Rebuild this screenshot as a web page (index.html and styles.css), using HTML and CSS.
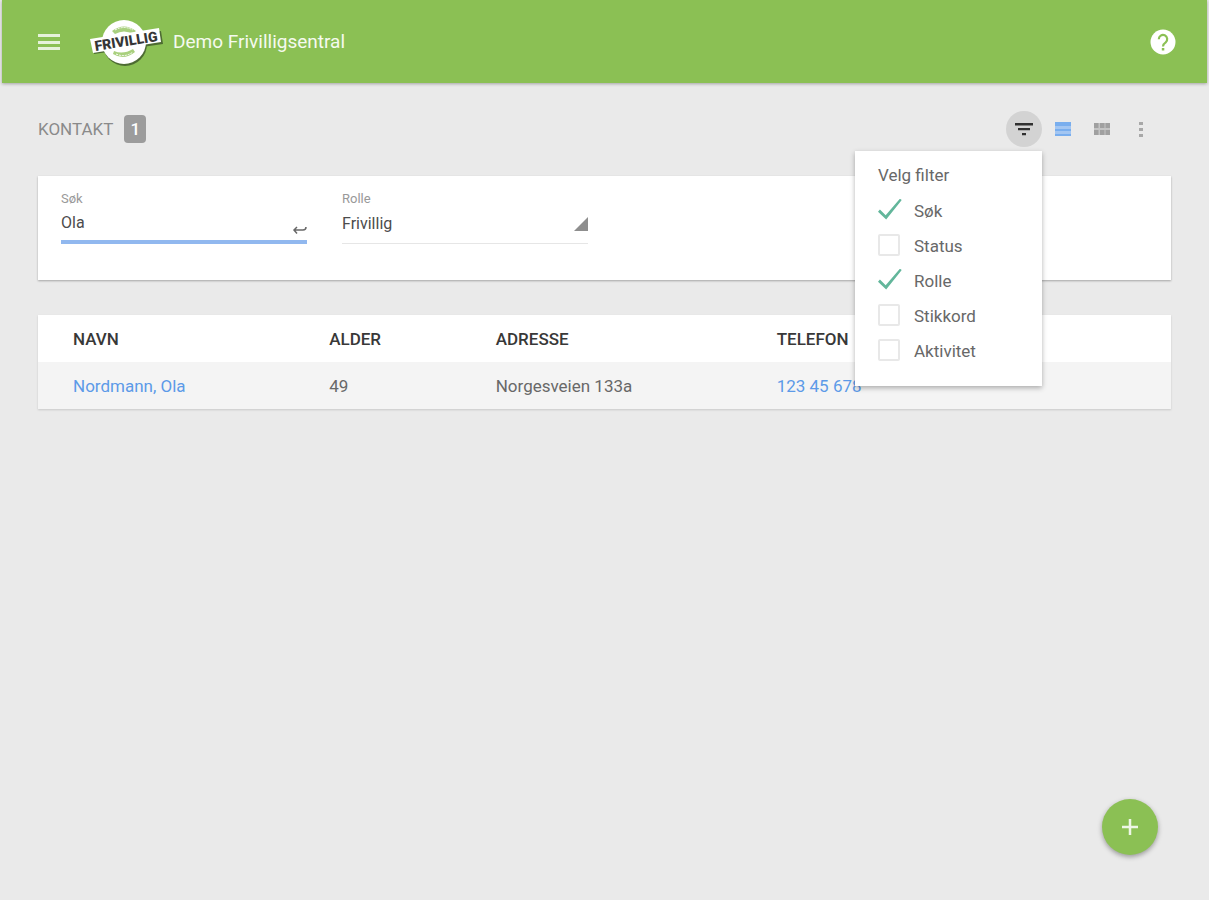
FILE: index.html
```html
<!DOCTYPE html>
<html lang="no">
<head>
<meta charset="utf-8">
<meta name="viewport" content="width=device-width, initial-scale=1">
<title>Demo Frivilligsentral</title>
<link rel="stylesheet" href="styles.css">
</head>
<body>
<header class="topbar">
  <button class="icon-button menu-button" type="button" aria-label="Meny">
    <svg width="22" height="18" viewBox="0 0 22 18"><path fill="#e6f2da" d="M0 1h22v3H0zM0 8h22v3H0zM0 14h22v3H0z"/></svg>
  </button>
  <a class="brand" href="#">
    <svg class="logo" width="76" height="52" viewBox="0 0 76 52" role="img" aria-label="Frivillig">
      <g fill="#4d6b32">
        <circle cx="36" cy="28" r="22"/>
        <path d="M3 25L72 15L74 28L5 38z"/>
      </g>
      <circle cx="35" cy="26" r="22" fill="#fff"/>
      <path d="M23 15q12-9 24 0l-3 3q-9-5-18 0zM24 38q11 7 22-2l-2-3q-10 6-19 2z" fill="#a9d07e"/>
      <path d="M26 14q9-5 18 0M27 38q9 4 17-2" fill="none" stroke="#fff" stroke-width="1" stroke-dasharray="2 1"/>
      <path d="M1 23L70 12L72 26L4 37z" fill="#fff"/>
      <text class="logo-text" x="37" y="30" text-anchor="middle" transform="rotate(-9 37 25)">FRIVILLIG</text>
    </svg>
    <span>Demo Frivilligsentral</span>
  </a>
  <button class="icon-button help-button" type="button" aria-label="Hjelp">
    <svg width="26" height="26" viewBox="0 0 26 26"><circle cx="13" cy="13" r="12.5" fill="#fff"/><path d="M8.800 10.200a4.200 4.200 0 1 1 6.900 3.200q-2.700 1.900-2.700 4" fill="none" stroke="#8bc054" stroke-width="2.200"/><path d="M11.800 19h2.500v2.500h-2.500z" fill="#8bc054"/></svg>
  </button>
</header>

<main class="page">
  <div class="heading">
    <h1 class="title">KONTAKT</h1>
    <span class="count">1</span>
    <div class="tools">
      <div class="filter">
        <button class="icon-button tool filter-button" type="button" aria-label="Velg filter" aria-expanded="true">
          <svg width="20" height="16" viewBox="0 0 20 16"><path fill="#303030" d="M1 2h18v2.500H1zM4 7h12v2.300H4zM8 12h4v2.300H8z"/></svg>
        </button>
        <fieldset class="filter-menu">
          <legend class="filter-title">Velg filter</legend>
          <label class="option"><input class="check" type="checkbox" checked><span>Søk</span></label>
          <label class="option"><input class="check" type="checkbox"><span>Status</span></label>
          <label class="option"><input class="check" type="checkbox" checked><span>Rolle</span></label>
          <label class="option"><input class="check" type="checkbox"><span>Stikkord</span></label>
          <label class="option"><input class="check" type="checkbox"><span>Aktivitet</span></label>
        </fieldset>
      </div>
      <button class="icon-button tool" type="button" aria-label="Liste">
        <svg width="16" height="16" viewBox="0 0 16 16"><path fill="#a3c6f2" d="M0 1h16v14H0z"/><path fill="#79aeee" d="M0 1h16v4H0zM0 8h16v2H0zM0 13h16v2H0z"/></svg>
      </button>
      <button class="icon-button tool" type="button" aria-label="Rutenett">
        <svg width="18" height="14" viewBox="0 0 18 14"><path fill="#c4c4c4" d="M1 1h16v12H1z"/><path fill="#a0a0a0" d="M1 1h4.500v5H1zM7 1h4.500v5H7zM12.500 1h4.500v5h-4.500zM1 8h4.500v5H1zM7 8h4.500v5H7zM12.500 8h4.500v5h-4.500z"/></svg>
      </button>
      <button class="icon-button tool" type="button" aria-label="Flere valg">
        <svg width="6" height="18" viewBox="0 0 6 18"><path fill="#a8a8a8" d="M1 2h4v3H1zM1 8h4v3H1zM1 14h4v3H1z"/></svg>
      </button>
    </div>
  </div>

  <form class="card filters">
    <div class="field">
      <label class="field-label" for="search">Søk</label>
      <div class="field-control focused">
        <input class="field-input" id="search" type="text" value="Ola">
        <svg class="enter" width="15" height="10" viewBox="0 0 15 10"><path d="M14 1q0 3-3 3H2M5 1L2 4L5 7.500" fill="none" stroke="#686868" stroke-width="1.500"/></svg>
      </div>
    </div>
    <div class="field">
      <label class="field-label" for="role">Rolle</label>
      <div class="field-control">
        <select class="field-input" id="role"><option>Frivillig</option></select>
        <svg width="14" height="14" viewBox="0 0 14 14"><path d="M14 0v14H0z" fill="#8e8e8e"/></svg>
      </div>
    </div>
  </form>

  <table class="contacts">
    <thead><tr><th class="name">NAVN</th><th class="age">ALDER</th><th class="address">ADRESSE</th><th>TELEFON</th></tr></thead>
    <tbody><tr><td class="name"><a href="#">Nordmann, Ola</a></td><td>49</td><td>Norgesveien 133a</td><td><a href="#">123 45 678</a></td></tr></tbody>
  </table>
</main>

<button class="add-button" type="button" aria-label="Legg til">
  <svg width="16" height="16" viewBox="0 0 16 16"><path d="M8 0v16M0 8h16" stroke="#eef6e6" stroke-width="2.500"/></svg>
</button>
</body>
</html>
```
FILE: styles.css
```css
* { box-sizing: border-box; }

body {
  margin: 0;
  padding: 0 2px;
  min-height: 100vh;
  background: #eaeaea;
  color: #686868;
  font: 17px/24px Roboto, sans-serif;
}

a { color: #5c9ae8; text-decoration: none; }
svg { display: block; flex: none; }

button, input, select { font: inherit; color: inherit; }

.icon-button {
  display: grid;
  place-items: center;
  flex: none;
  padding: 0;
  border: 0;
  background: none;
}

.topbar {
  display: flex;
  align-items: center;
  height: 83px;
  padding: 0 31px 0 36px;
  background: #8bc054;
  box-shadow: 0 1px 3px rgba(0, 0, 0, .3);
}

.brand {
  display: flex;
  align-items: center;
  gap: 8px;
  margin-left: 29px;
  color: #f5faef;
  font-size: 19px;
}

.logo-text { font: 900 14px Roboto, sans-serif; fill: #363636; }
.help-button { margin-left: auto; }

.page { padding: 28px 36px; }

.heading { display: flex; align-items: center; height: 36px; }
.title { margin: 0; color: #8a8a8a; font-size: 17px; font-weight: 400; }

.count {
  width: 22px;
  height: 28px;
  margin-left: 11px;
  border-radius: 4px;
  background: #9c9c9c;
  color: #fff;
  font-weight: 500;
  line-height: 28px;
  text-align: center;
}

.tools { display: flex; align-items: center; gap: 3px; margin: 0 12px 0 auto; }
.tool { width: 36px; height: 36px; }
.filter { position: relative; }

.filter-button { border-radius: 50%; background: #d3d3d3; }

.filter-menu {
  position: absolute;
  z-index: 1;
  top: 40px;
  right: 0;
  width: 187px;
  margin: 0;
  padding: 11px 23px 18px;
  border: 0;
  background: #fff;
  box-shadow: 0 2px 5px rgba(0, 0, 0, .3);
}

.filter-title { float: left; width: 100%; padding: 0; height: 31px; line-height: 26px; }
.option { display: flex; align-items: center; gap: 14px; clear: both; height: 35px; }

.check {
  appearance: none;
  width: 22px;
  height: 22px;
  margin: 0 0 2px;
  border: 2px solid #e8e8e8;
  border-radius: 2px;
}

.check:checked {
  width: 24px;
  margin-right: -2px;
  border: 0;
  background: #63b69b;
  clip-path: polygon(0 60%, 8% 50%, 32% 76%, 92% 0, 100% 6%, 34% 96%);
}

.card {
  background: #fff;
  box-shadow: 0 1px 2px rgba(0, 0, 0, .3);
}

.filters { display: flex; gap: 35px; margin-top: 29px; padding: 13px 23px 36px; }
.field { width: 246px; }
.field-label { display: block; color: #999; font-size: 13px; line-height: 20px; }

.field-control {
  display: flex;
  align-items: center;
  height: 35px;
  padding-bottom: 4px;
  border-bottom: 1px solid #e6e6e6;
}

.field-control.focused { padding-bottom: 4px; border-bottom: 4px solid #91b8ef; }
.enter { align-self: flex-end; }

.field-input {
  flex: 1;
  min-width: 0;
  padding: 0;
  border: 0;
  outline: 0;
  background: none;
  appearance: none;
  color: #4c4c4c;
  font-size: 16px;
}

.contacts {
  width: 100%;
  margin-top: 35px;
  border-collapse: collapse;
  table-layout: fixed;
  background: #fff;
  box-shadow: 0 1px 2px rgba(0, 0, 0, .15);
}

.contacts th, .contacts td { height: 47px; padding: 0; text-align: left; }
.contacts th { color: #383838; font-weight: 500; }
.contacts td { background: #f4f4f4; }
.contacts .name { width: 25.7%; padding-left: 35px; }
.contacts .age { width: 14.7%; }
.contacts .address { width: 24.8%; }

.add-button {
  position: fixed;
  right: 51px;
  bottom: 45px;
  display: grid;
  place-items: center;
  width: 56px;
  height: 56px;
  padding: 0;
  border: 0;
  border-radius: 50%;
  background: #8bc054;
  box-shadow: 0 2px 5px rgba(0, 0, 0, .35);
}
```
